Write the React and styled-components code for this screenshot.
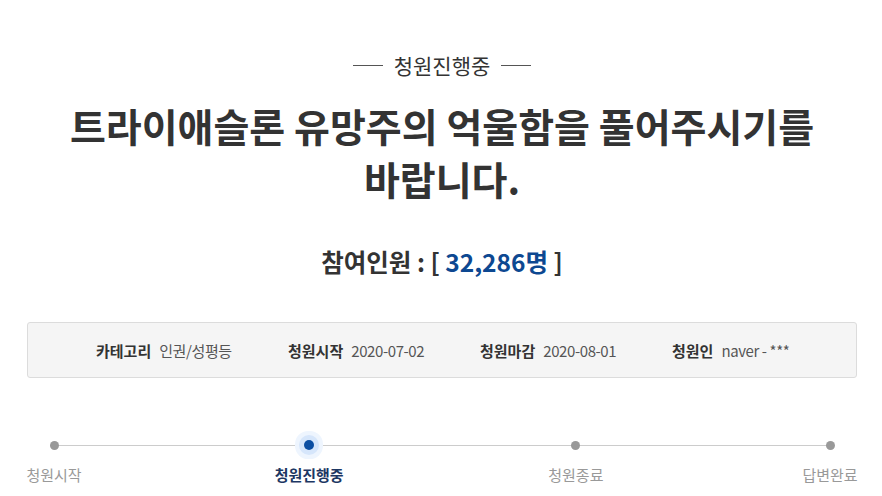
import React from "react";
import styled, { createGlobalStyle } from "styled-components";

const Global = createGlobalStyle`
  html, body { margin: 0; padding: 0; background: #fff; }
  body { font-family: "Noto Sans CJK KR", "Noto Sans", sans-serif; color: #333; }
`;

const Page = styled.div`
  width: 882px;
  padding: 50px 25px 0 27px;
  box-sizing: border-box;
`;

const Status = styled.div`
  display: flex;
  align-items: center;
  justify-content: center;
  gap: 11px;
  height: 30px;
  font-size: 21px;
  color: #333;
  &::before, &::after {
    content: "";
    width: 30px;
    height: 1px;
    background: #555;
  }
`;

const Title = styled.h1`
  margin: 19px 0 0;
  text-align: center;
  font-size: 39px;
  line-height: 53px;
  font-weight: 700;
  color: #333;
  letter-spacing: 0;
`;

const Count = styled.div`
  margin-top: 42px;
  height: 30px;
  line-height: 30px;
  text-align: center;
  font-size: 24.5px;
  font-weight: 700;
  color: #333;
`;

const Num = styled.span`
  color: #0d4891;
`;

const InfoBox = styled.div`
  margin-top: 45px;
  height: 56px;
  box-sizing: border-box;
  border: 1px solid #dcdcdc;
  border-radius: 3px;
  background: #f5f5f5;
  display: grid;
  grid-template-columns: repeat(4, 192px);
  align-items: center;
  padding-left: 68px;
`;

const InfoItem = styled.div`
  display: flex;
  align-items: baseline;
  gap: 8px;
  font-size: 15px;
  white-space: nowrap;
`;

const Label = styled.span`
  font-weight: 700;
  color: #333;
`;

const Value = styled.span`
  color: #555;
  letter-spacing: -0.4px;
`;

const Steps = styled.div`
  position: relative;
  margin-top: 52px;
  display: grid;
  grid-template-columns: 54px 1fr 54px 1fr 54px 1fr 54px;
  &::before {
    content: "";
    position: absolute;
    left: 26px;
    right: 27px;
    top: 15px;
    height: 1px;
    background: #cccccc;
  }
`;

const Step = styled.div`
  position: relative;
  display: flex;
  flex-direction: column;
  align-items: center;
  grid-column: ${(p) => p.$col};
  margin-left: ${(p) => p.$shift || 0}px;
`;

const DotWrap = styled.div`
  height: 30px;
  display: flex;
  align-items: center;
  justify-content: center;
`;

const Dot = styled.span`
  display: block;
  width: ${(p) => (p.$active ? 10 : 9)}px;
  height: ${(p) => (p.$active ? 10 : 9)}px;
  border-radius: 50%;
  background: ${(p) => (p.$active ? "#0b4ea2" : "#999")};
  box-shadow: ${(p) =>
    p.$active ? "0 0 0 5px #d6e6fb, 0 0 0 9px #eef5fe" : "none"};
`;

const StepLabel = styled.div`
  margin-top: 5px;
  line-height: 20px;
  font-size: 15px;
  font-weight: ${(p) => (p.$active ? 700 : 400)};
  color: ${(p) => (p.$active ? "#1d3763" : "#999")};
  white-space: nowrap;
`;

const info = [
  ["카테고리", "인권/성평등"],
  ["청원시작", "2020-07-02"],
  ["청원마감", "2020-08-01"],
  ["청원인", "naver - ***"],
];

const steps = [
  { label: "청원시작", col: 1 },
  { label: "청원진행중", col: 3, shift: -7 },
  { label: "청원종료", col: 5, shift: 9 },
  { label: "답변완료", col: 7 },
];

export default function App() {
  return (
    <Page>
      <Global />
      <Status>청원진행중</Status>
      <Title>
        트라이애슬론 유망주의 억울함을 풀어주시기를
        <br />
        바랍니다.
      </Title>
      <Count>
        참여인원 : [ <Num>32,286명</Num> ]
      </Count>
      <InfoBox>
        {info.map(([l, v]) => (
          <InfoItem key={l}>
            <Label>{l}</Label>
            <Value>{v}</Value>
          </InfoItem>
        ))}
      </InfoBox>
      <Steps>
        {steps.map((s, i) => (
          <Step key={s.label} $col={s.col} $shift={s.shift}>
            <DotWrap>
              <Dot $active={i === 1} />
            </DotWrap>
            <StepLabel $active={i === 1}>{s.label}</StepLabel>
          </Step>
        ))}
      </Steps>
    </Page>
  );
}
